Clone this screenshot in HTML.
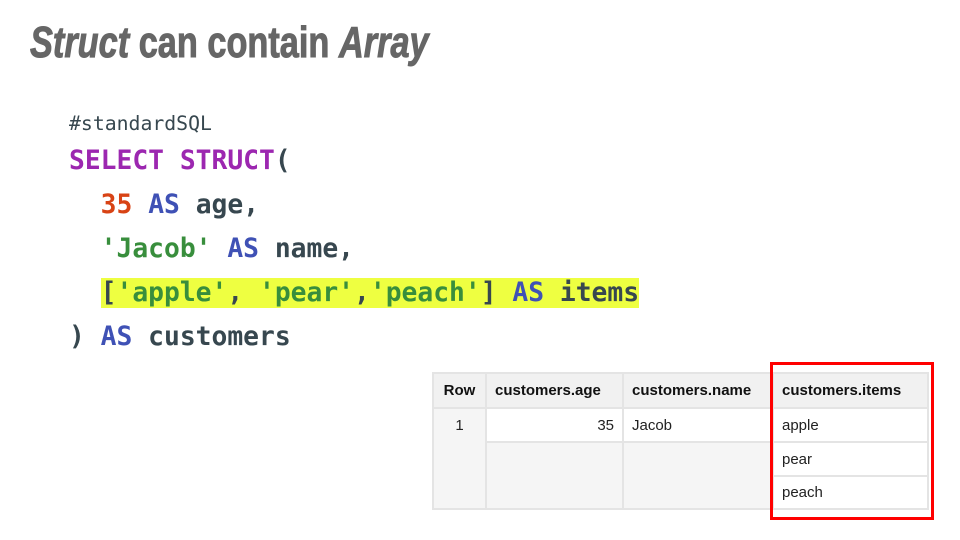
<!DOCTYPE html>
<html><head><meta charset="utf-8"><style>
body{margin:0;width:960px;height:540px;background:#fff;position:relative;overflow:hidden;font-family:"Liberation Sans",sans-serif}
.t{position:absolute;left:30px;top:18px;font-size:44px;font-weight:bold;color:#666;transform:scaleX(0.78);transform-origin:left top;white-space:nowrap;-webkit-text-stroke:1px #666}
.code{position:absolute;left:69px;font-family:"DejaVu Sans Mono",monospace;font-size:26.3px;color:#37474f;white-space:pre;font-weight:bold}
.k{color:#9c27b0}.b{color:#3f51b5}.n{color:#d84315}.s{color:#388e3c}
.hl{background:#eeff41}
table{position:absolute;left:432px;top:372px;border-collapse:collapse;font-size:15px;color:#222}
td,th{border:2px solid #e4e4e4;padding:0 8px;height:32px;box-sizing:border-box}
th{background:#f1f1f1;font-weight:bold;text-align:left;color:#111}
.red{position:absolute;left:770px;top:362px;width:158px;height:152px;border:3px solid #f00}
</style></head><body>
<div class="t"><i>Struct</i> can contain <i>Array</i></div>
<div class="code" style="top:112px;font-size:19.8px;font-weight:normal">#standardSQL</div>
<div class="code" style="top:146px"><span class="k">SELECT STRUCT</span>(</div>
<div class="code" style="top:190px">  <span class="n">35</span> <span class="b">AS</span> age,</div>
<div class="code" style="top:234px">  <span class="s">'Jacob'</span> <span class="b">AS</span> name,</div>
<div class="code" style="top:278px">  <span class="hl">[<span class="s">'apple'</span>, <span class="s">'pear'</span>,<span class="s">'peach'</span>] <span class="b">AS</span> items</span></div>
<div class="code" style="top:322px">) <span class="b">AS</span> customers</div>
<table>
<tr style="height:35px"><th style="width:53px;text-align:center">Row</th><th style="width:137px">customers.age</th><th style="width:150px">customers.name</th><th style="width:155px">customers.items</th></tr>
<tr style="height:34px"><td style="background:#f5f5f5;text-align:center;vertical-align:top;padding-top:8px" rowspan="3">1</td><td style="text-align:right">35</td><td>Jacob</td><td>apple</td></tr>
<tr style="height:34px"><td style="background:#f5f5f5" rowspan="2"></td><td style="background:#f5f5f5" rowspan="2"></td><td>pear</td></tr>
<tr style="height:33px"><td>peach</td></tr>
</table>
<div class="red"></div>
</body></html>
